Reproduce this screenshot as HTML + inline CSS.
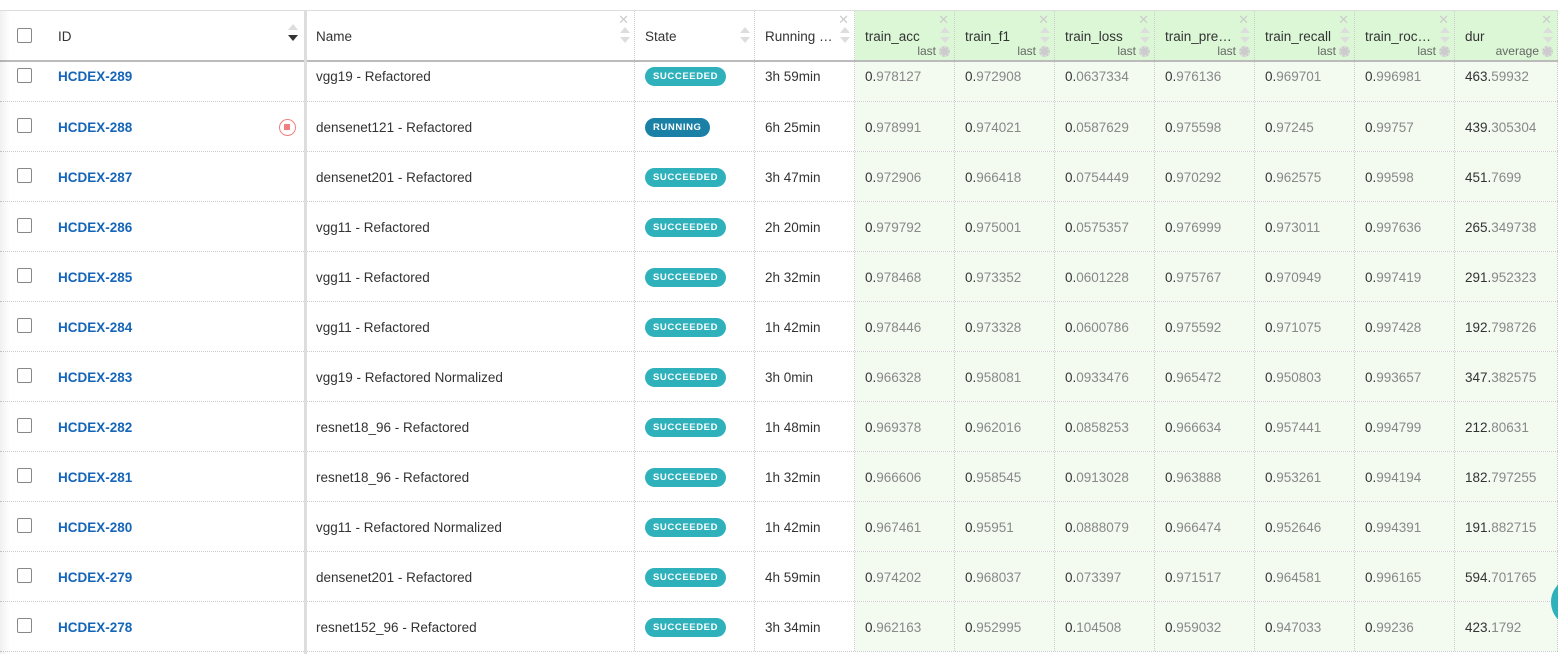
<!DOCTYPE html><html><head><style>
*{box-sizing:border-box;margin:0;padding:0}
body{width:1558px;height:654px;overflow:hidden;background:#fff;font-family:"Liberation Sans",sans-serif;font-size:13.5px;color:#333;position:relative}
.top{position:absolute;left:0;top:10px;width:1558px;height:1px;background:#ddd}
.row{position:absolute;left:0;width:1558px;border-bottom:1px dotted #ccc;overflow:hidden}
.c{position:absolute;top:0;height:100%;border-right:1px dotted #ccc;display:flex;align-items:center;padding-left:10px;white-space:nowrap}
.g{background:#f3fbf1}
.hdr .g{background:#dbf7d6}
.hdr{top:11px;height:51px;border-bottom:2px solid #bbb}
.hdr .c{font-size:13.5px;color:#333;padding-top:2px}
.cb{width:15px;height:15px;border:1.5px solid #888;border-radius:2px;background:#fff}
.id{color:#1565b8;font-weight:bold}
.b{font-size:9.5px;font-weight:bold;color:#fff;letter-spacing:.6px;border-radius:10px;padding:4px 8px;background:#2fb1bc}
.run{background:#1a80a6}
.n{color:#333}.n span{color:#888}
.x{position:absolute;right:5px;top:1px;color:#ccc;font-size:13px}
.ar{position:absolute;right:4px;top:16px;width:10px;height:18px}
.ar:before{content:"";position:absolute;left:0;top:0;border:5px solid transparent;border-bottom:6px solid #ddd;border-top:0}
.ar:after{content:"";position:absolute;left:0;top:10px;border:5px solid transparent;border-top:6px solid #ddd;border-bottom:0}
.lst{position:absolute;right:18px;bottom:2px;font-size:12px;color:#666}
.gear{position:absolute;right:4px;bottom:3px;width:11px;height:11px;border-radius:50%;background:#ccc;border:2px dotted #ddd}
.sh{position:absolute;left:0;top:11px;width:10px;height:643px;background:linear-gradient(90deg,rgba(0,0,0,.06),rgba(0,0,0,0));pointer-events:none}
</style></head><body>
<div class="top"></div>
<div id="t"></div>
<div class="sh"></div>
<div style="position:absolute;left:304px;top:11px;width:3px;height:643px;background:#ddd"></div>
<div style="position:absolute;left:1551px;top:577px;width:50px;height:50px;border-radius:50%;background:#2fb1bc"></div>
<script>
const cols=[[0,48],[48,256],[306,329],[635,120],[755,100],[855,100],[955,100],[1055,100],[1155,100],[1255,100],[1355,100],[1455,103]];
const data=[
["289","vgg19 - Refactored",0,"3h 59min","0.978127","0.972908","0.0637334","0.976136","0.969701","0.996981","463.59932"],
["288","densenet121 - Refactored",1,"6h 25min","0.978991","0.974021","0.0587629","0.975598","0.97245","0.99757","439.305304"],
["287","densenet201 - Refactored",0,"3h 47min","0.972906","0.966418","0.0754449","0.970292","0.962575","0.99598","451.7699"],
["286","vgg11 - Refactored",0,"2h 20min","0.979792","0.975001","0.0575357","0.976999","0.973011","0.997636","265.349738"],
["285","vgg11 - Refactored",0,"2h 32min","0.978468","0.973352","0.0601228","0.975767","0.970949","0.997419","291.952323"],
["284","vgg11 - Refactored",0,"1h 42min","0.978446","0.973328","0.0600786","0.975592","0.971075","0.997428","192.798726"],
["283","vgg19 - Refactored Normalized",0,"3h 0min","0.966328","0.958081","0.0933476","0.965472","0.950803","0.993657","347.382575"],
["282","resnet18_96 - Refactored",0,"1h 48min","0.969378","0.962016","0.0858253","0.966634","0.957441","0.994799","212.80631"],
["281","resnet18_96 - Refactored",0,"1h 32min","0.966606","0.958545","0.0913028","0.963888","0.953261","0.994194","182.797255"],
["280","vgg11 - Refactored Normalized",0,"1h 42min","0.967461","0.95951","0.0888079","0.966474","0.952646","0.994391","191.882715"],
["279","densenet201 - Refactored",0,"4h 59min","0.974202","0.968037","0.073397","0.971517","0.964581","0.996165","594.701765"],
["278","resnet152_96 - Refactored",0,"3h 34min","0.962163","0.952995","0.104508","0.959032","0.947033","0.99236","423.1792"]];
let h='<div class="row hdr">';
const hn=["","ID","Name","State","Running …","train_acc","train_f1","train_loss","train_pre…","train_recall","train_roc…","dur"];
hn.forEach((n,i)=>{const[l,w]=cols[i];let cls='c'+(i>=5?' g':'');let inner=i==0?'<div class="cb" style="margin-left:7px;margin-top:-2px"></div>':n;
if(i==1)inner+='<span style="position:absolute;right:6px;top:24px;border:5px solid transparent;border-top:6px solid #333;border-bottom:0"></span><span style="position:absolute;right:6px;top:13px;border:5px solid transparent;border-bottom:6px solid #ddd;border-top:0"></span>';
if(i>=2)inner+='<span class="ar"></span>';
if(i>=2&&i!=3)inner+='<span class="x">✕</span>';
if(i>=5)inner+='<span class="lst">'+(i==11?'average':'last')+'</span><span class="gear"></span>';
h+=`<div class="${cls}" style="left:${l}px;width:${w}px;${i<=1?'border-right:none':''}">${inner}</div>`});
h+='</div>';
data.forEach((r,k)=>{const top=k==0?62:102+(k-1)*50;const ht=k==0?40:50;const off=k==0?'margin-top:-10px;':'margin-top:1px;';
h+=`<div class="row" style="top:${top}px;height:${ht}px">`;
const cells=['<div class="cb" style="margin-left:7px;'+(k==0?'margin-top:-12px':'margin-top:-3px')+'"></div>',
`<span class="id" style="${off}">HCDEX-${r[0]}</span>`+(r[2]?'<span style="position:absolute;right:8px;top:17px;width:17px;height:17px;border:1.5px solid #f08080;border-radius:50%"><span style="position:absolute;left:4px;top:4px;width:6px;height:6px;background:#f08080"></span></span>':''),
`<span style="${off}">${r[1]}</span>`,
`<span class="b ${r[2]?'run':''}" style="${off}">${r[2]?'RUNNING':'SUCCEEDED'}</span>`,
`<span style="${off}">${r[3]}</span>`];
for(let j=4;j<11;j++){const p=r[j].split('.');cells.push(`<span class="n" style="${off}">${p[0]}.<span>${p[1]}</span></span>`)}
cells.forEach((c,i)=>{const[l,w]=cols[i];h+=`<div class="c${i>=5?' g':''}" style="left:${l}px;width:${w}px;${i<=1?'border-right:none':''}">${c}</div>`});
h+='</div>'});
document.getElementById('t').innerHTML=h;
</script>
</body></html>
